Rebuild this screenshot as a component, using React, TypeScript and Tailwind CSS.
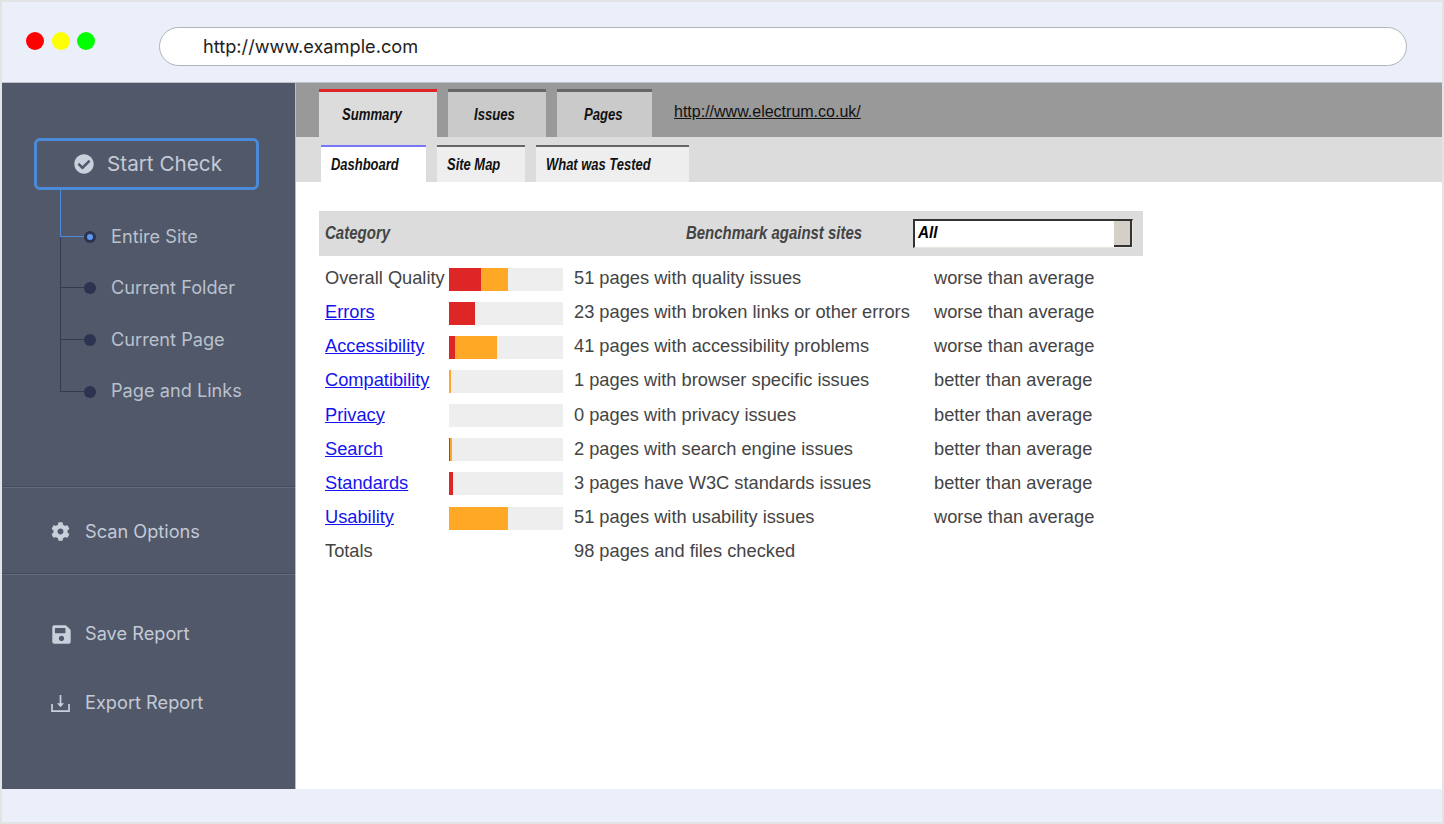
import React from "react"
import { FaCheckCircle, FaCog, FaSave } from "react-icons/fa"

const treeItems = [
  { label: "Entire Site", active: true, height: "h-[47px]", lift: "mb-[1px]" },
  { label: "Current Folder", active: false, height: "h-[51px]", lift: "mb-[1px]" },
  { label: "Current Page", active: false, height: "h-[52px]", lift: "mb-[1px]" },
  { label: "Page and Links", active: false, height: "h-[52px]", lift: "mb-[3px]" },
]

const rows = [
  { name: "Overall Quality", link: false, red: 32, orange: 27, text: "51 pages with quality issues", bench: "worse than average" },
  { name: "Errors", link: true, red: 26, orange: 0, text: "23 pages with broken links or other errors", bench: "worse than average" },
  { name: "Accessibility", link: true, red: 6, orange: 42, text: "41 pages with accessibility problems", bench: "worse than average" },
  { name: "Compatibility", link: true, red: 0, orange: 1.5, text: "1 pages with browser specific issues", bench: "better than average" },
  { name: "Privacy", link: true, red: 0, orange: 0, text: "0 pages with privacy issues", bench: "better than average" },
  { name: "Search", link: true, red: 1, orange: 1.5, text: "2 pages with search engine issues", bench: "better than average" },
  { name: "Standards", link: true, red: 4, orange: 0, text: "3 pages have W3C standards issues", bench: "better than average" },
  { name: "Usability", link: true, red: 0, orange: 59, text: "51 pages with usability issues", bench: "worse than average" },
]

const ExportIcon = () => (
  <svg width="19" height="19" viewBox="0 0 19 19" fill="none" stroke="#c8d0dc" strokeWidth="1.7">
    <path d="M1 10v7.2h17V10" />
    <path d="M9.5 1v9" />
    <path d="M6 9.2h7l-3.5 4z" fill="#c8d0dc" stroke="none" />
  </svg>
)

const Divider = () => (
  <div className="border-t border-b border-t-[#454b5b] border-b-[#646b7a]" />
)

const SideLink = ({ icon, label }: { icon: React.ReactNode, label: string }) => (
  <div className="flex items-center h-[24px]">
    <span className="w-[34px] flex items-center">{icon}</span>
    <span className="text-[18.2px] text-[#c3cad6]">{label}</span>
  </div>
)

const Sidebar = () => (
  <aside className="w-[294px] shrink-0 bg-[#515869] border-r border-r-[#b9bdc4] flex flex-col font-['Inter',sans-serif]">
    <div className="h-[403px] pl-[32px] pt-[55px]">
      <div className="w-[225px] h-[52px] border-[3px] border-[#4a8ad8] rounded-[6px] flex items-center pl-[37px] gap-[13px]">
        <FaCheckCircle className="text-[#c8d0dc]" size={20} />
        <span className="text-[20.7px] text-[#c3cad6]">Start Check</span>
      </div>
      <div className="ml-[26px]">
        {treeItems.map((item) => (
          <div key={item.label} className={`flex items-end ${item.height}`}>
            <div
              className={`w-[24px] h-full border-l border-b ${
                item.active ? "border-[#4a8ad8]" : "border-[#343b50]"
              }`}
            />
            <div className="flex items-center h-0">
              <span className="w-[12px] h-[12px] rounded-full bg-[#2b3350] flex items-center justify-center">
                {item.active && <span className="w-[6px] h-[6px] rounded-full bg-[#5a9af0]" />}
              </span>
              <span className={`ml-[15px] text-[18.2px] text-[#b9c1ce] whitespace-nowrap ${item.lift}`}>{item.label}</span>
            </div>
          </div>
        ))}
      </div>
    </div>
    <Divider />
    <div className="h-[85px] pl-[49px] pt-[2px] flex items-center">
      <SideLink icon={<FaCog className="text-[#c8d0dc]" size={19} />} label="Scan Options" />
    </div>
    <Divider />
    <div className="pl-[49px] pt-[47px] flex flex-col gap-[45px]">
      <SideLink icon={<FaSave className="text-[#c8d0dc]" size={21} />} label="Save Report" />
      <SideLink icon={<ExportIcon />} label="Export Report" />
    </div>
  </aside>
)

const MainTab = ({ label, width, active }: { label: string, width: string, active?: boolean }) => (
  <div
    className={`h-[48px] flex items-center border-t-[3px] text-[16px] font-bold italic text-[#111] ${width} ${
      active ? "border-t-[#df2626] bg-[#dcdcdc]" : "border-t-[#666] bg-[#cacaca]"
    }`}
  >
    <span className="inline-block origin-left scale-x-[0.82]">{label}</span>
  </div>
)

const SubTab = ({ label, active, width }: { label: string, active?: boolean, width: string }) => (
  <div
    className={`h-[37px] flex items-center pl-[10px] border-t-2 text-[16px] font-bold italic text-[#111] ${width} ${
      active ? "border-t-[#7878ff] bg-white" : "border-t-[#666] bg-[#eeeeee]"
    }`}
  >
    <span className="inline-block origin-left scale-x-[0.81]">{label}</span>
  </div>
)

const Bar = ({ red, orange }: { red: number, orange: number }) => (
  <div className="w-[114px] h-[23px] mt-[3px] bg-[#eeeeee] flex">
    <div className="h-full bg-[#df2626]" style={{ width: red }} />
    <div className="h-full bg-[#ffa826]" style={{ width: orange }} />
  </div>
)

const Report = () => (
  <main className="flex-1 bg-white flex flex-col font-['Liberation_Sans',Arial,sans-serif]">
    <div className="h-[54px] bg-[#999999] flex items-end pl-[23px] gap-[11px]">
      <MainTab label="Summary" width="w-[118px] pl-[23px]" active />
      <MainTab label="Issues" width="w-[98px] pl-[26px]" />
      <MainTab label="Pages" width="w-[95px] pl-[27px]" />
      <a className="self-start mt-[19px] ml-[11px] text-[16px] leading-[20px] underline text-[#111]">
        http://www.electrum.co.uk/
      </a>
    </div>
    <div className="h-[45px] bg-[#dcdcdc] flex items-end pl-[25px] gap-[11px]">
      <SubTab label="Dashboard" active width="w-[105px]" />
      <SubTab label="Site Map" width="w-[88px]" />
      <SubTab label="What was Tested" width="w-[153px]" />
    </div>
    <div className="pl-[23px] pt-[29px]">
      <div className="w-[824px] h-[45px] bg-[#dcdcdc] flex items-center pl-[6px] text-[#444] font-bold italic text-[18px]">
        <span className="w-[361px] pb-[1px]"><span className="inline-block origin-left scale-x-[0.835]">Category</span></span>
        <span className="w-[227px] pb-[1px] whitespace-nowrap"><span className="inline-block origin-left scale-x-[0.83]">Benchmark against sites</span></span>
        <div className="w-[220px] h-[29px] bg-white border-t-2 border-l-2 border-r border-b border-t-[#333] border-l-[#333] border-r-[#e8e8e0] border-b-[#e8e8e0] flex items-center justify-between">
          <span className="pl-[3px] pb-[3px] text-[17px] text-black"><span className="inline-block origin-left scale-x-[0.9]">All</span></span>
          <span className="w-[18px] h-full bg-[#d4d0c8] border-r-2 border-b-2 border-[#333]" />
        </div>
      </div>
      <div className="pt-[4.625px] pl-[6px] text-[18.25px] text-[#444]">
        {rows.map((row) => (
          <div key={row.name} className="h-[34.125px] flex items-center">
            <span className="w-[124px] whitespace-nowrap">
              {row.link ? <a className="text-[#1414f0] underline">{row.name}</a> : row.name}
            </span>
            <Bar red={row.red} orange={row.orange} />
            <span className="w-[371px] pl-[11px] whitespace-nowrap">{row.text}</span>
            <span>{row.bench}</span>
          </div>
        ))}
        <div className="h-[34.125px] flex items-center">
          <span className="w-[238px]">Totals</span>
          <span className="pl-[11px]">98 pages and files checked</span>
        </div>
      </div>
    </div>
  </main>
)

export default function App() {
  return (
    <div className="w-[1444px] h-[824px] border-2 border-[#e2e4e6] bg-[#eaeff9] flex flex-col overflow-hidden">
      <header className="h-[81px] shrink-0 border-b border-b-[#bfc3c9] flex pl-[24px] pr-[35px]">
        <div className="flex gap-[7.5px] pt-[30px] w-[133px]">
          <span className="w-[18px] h-[18px] rounded-full bg-[#ff0000]" />
          <span className="w-[18px] h-[18px] rounded-full bg-[#ffff00]" />
          <span className="w-[18px] h-[18px] rounded-full bg-[#00ff00]" />
        </div>
        <div className="flex-1 mt-[25px] h-[39px] rounded-full bg-white border border-[#b0b5bc] flex items-center pl-[43px] font-['Inter',sans-serif] text-[18.2px] text-[#222]">
          http://www.example.com
        </div>
      </header>
      <div className="h-[706px] flex">
        <Sidebar />
        <Report />
      </div>
    </div>
  )
}
